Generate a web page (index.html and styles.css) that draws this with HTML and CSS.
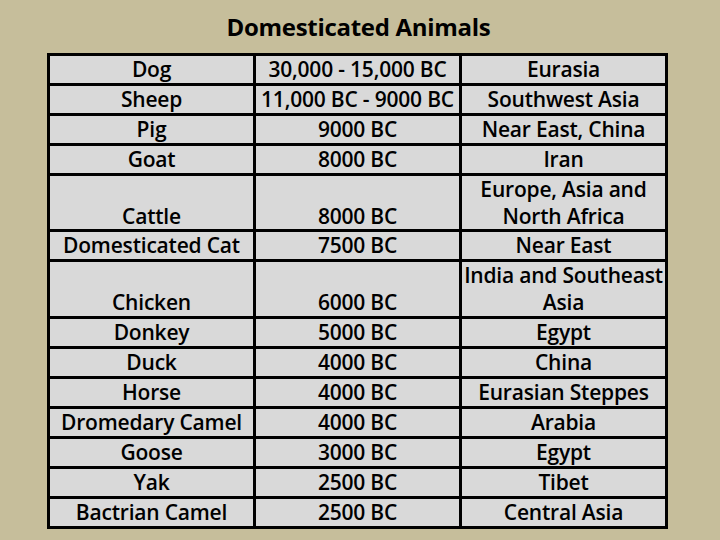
FILE: index.html
```html
<!DOCTYPE html>
<html>
<head>
<meta charset="utf-8">
<link rel="stylesheet" href="styles.css">
</head>
<body>
<div class="slide">
  <h1 class="title">Domesticated Animals</h1>
  <table class="animals">
    <tr><td>Dog</td><td>30,000 - 15,000 BC</td><td>Eurasia</td></tr>
    <tr><td>Sheep</td><td>11,000 BC - 9000 BC</td><td>Southwest Asia</td></tr>
    <tr><td>Pig</td><td>9000 BC</td><td>Near East, China</td></tr>
    <tr><td>Goat</td><td>8000 BC</td><td>Iran</td></tr>
    <tr><td>Cattle</td><td>8000 BC</td><td>Europe, Asia and<br>North Africa</td></tr>
    <tr><td>Domesticated Cat</td><td>7500 BC</td><td>Near East</td></tr>
    <tr><td>Chicken</td><td>6000 BC</td><td>India and Southeast<br>Asia</td></tr>
    <tr><td>Donkey</td><td>5000 BC</td><td>Egypt</td></tr>
    <tr><td>Duck</td><td>4000 BC</td><td>China</td></tr>
    <tr><td>Horse</td><td>4000 BC</td><td>Eurasian Steppes</td></tr>
    <tr><td>Dromedary Camel</td><td>4000 BC</td><td>Arabia</td></tr>
    <tr><td>Goose</td><td>3000 BC</td><td>Egypt</td></tr>
    <tr><td>Yak</td><td>2500 BC</td><td>Tibet</td></tr>
    <tr><td>Bactrian Camel</td><td>2500 BC</td><td>Central Asia</td></tr>
  </table>
</div>
</body>
</html>
```
FILE: styles.css
```css
html, body {
  margin: 0;
  padding: 0;
  background: #c6be9b;
}
.slide {
  width: 720px;
  height: 540px;
  overflow: hidden;
  background: #c6be9b;
  font-family: "Open Sans", "DejaVu Sans", sans-serif;
  color: #000;
}
.title {
  margin: 0;
  height: 53px;
  box-sizing: border-box;
  padding-top: 10px;
  padding-right: 3px;
  font-size: 24px;
  line-height: 33px;
  font-weight: 700;
  letter-spacing: -0.3px;
  text-align: center;
}
.animals {
  margin-left: 47px;
  width: 621px;
  border-collapse: collapse;
  table-layout: fixed;
  background: #d9d9d9;
  border: 3px solid #000;
}
.animals td {
  border: 3px solid #000;
  padding: 0;
  text-align: center;
  vertical-align: bottom;
  font-size: 21px;
  font-weight: 600;
  line-height: 26.9px;
  white-space: nowrap;
  letter-spacing: -0.2px;
}
```
